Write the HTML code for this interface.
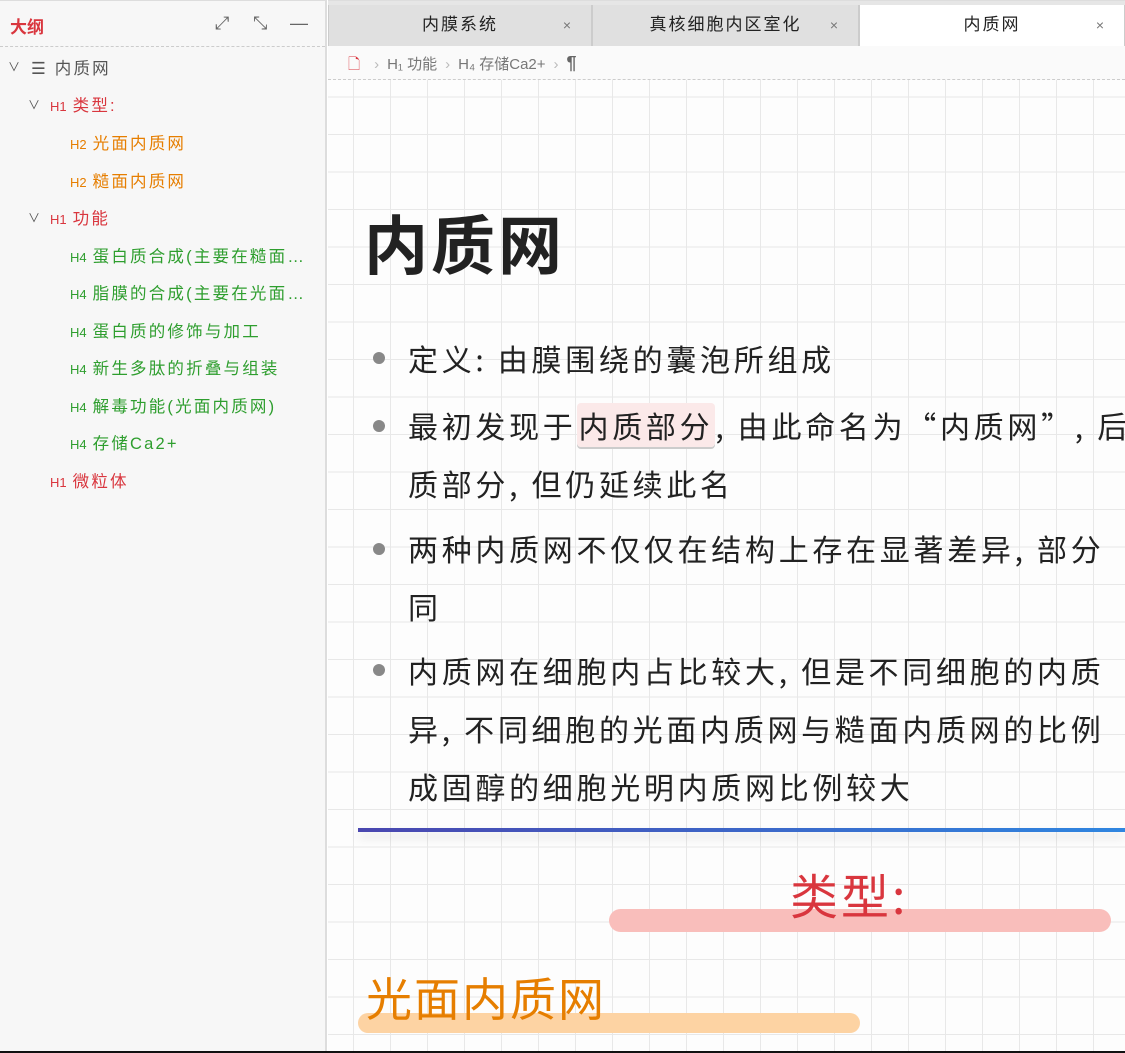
<!DOCTYPE html>
<html><head><meta charset="utf-8">
<style>
*{margin:0;padding:0;box-sizing:border-box}
body{width:1125px;height:1053px;overflow:hidden;background:#fff;font-family:"Liberation Sans","Noto Sans CJK SC",sans-serif;position:relative}
.side{position:absolute;left:0;top:0;width:327px;height:1053px;background:#f7f7f7;border-right:2px solid #ddd;border-top:1px solid #ddd}
.side .hd{height:46px;border-bottom:1px dashed #ccc;position:relative}
.side .hd b{position:absolute;left:10px;top:12px;color:#d9363e;font-size:17px}
.ic{position:absolute;top:12px;color:#666;font-size:18px}
.it{position:absolute;font-size:16.5px;white-space:nowrap;letter-spacing:2.2px}
.it small{font-size:13px;margin-right:6px;letter-spacing:0}
.r{color:#d9363e}.o{color:#e67e00}.g{color:#2e9e2e}
.car{position:absolute;font-size:12px;color:#555}
.tabs{position:absolute;left:328px;top:0;right:0;height:46px;background:#e6e6e6;border-top:1px solid #ddd}
.tab{position:absolute;top:4px;height:42px;background:#e0e0e0;border-left:1px solid #ccc;border-right:1px solid #ccc;font-size:17px;color:#222;text-align:center;line-height:40px;letter-spacing:2px}
.tab i{position:absolute;right:18px;top:0;font-style:normal;color:#777;font-size:14px}
.main{position:absolute;left:328px;top:46px;right:0;bottom:0;background-color:#fdfdfd;
background-image:linear-gradient(#e8e8e8 1px,transparent 1px),linear-gradient(90deg,#e8e8e8 1px,transparent 1px);background-size:37px 37.5px;background-position:25px 13px}
.bc{position:absolute;left:0;top:0;right:0;height:34px;background:#fafafa;border-bottom:1px dashed #ccc;font-size:15px;color:#777;line-height:34px;padding-left:20px}
.bc span{color:#bbb;margin:0 8px}
h1{position:absolute;left:36px;top:150px;font-size:64px;font-weight:700;color:#222;letter-spacing:3px;font-family:"Noto Sans CJK SC",sans-serif}
.li{position:absolute;left:80px;font-size:30px;color:#222;letter-spacing:3.7px;line-height:58px;white-space:nowrap;font-family:"Noto Sans CJK SC",sans-serif}
.dot{position:absolute;left:45px;width:12px;height:12px;border-radius:50%;background:#888}
.hl{background:#fbe9e9;border-radius:4px;box-shadow:0 2px 0 #ccc;padding:0 2px}
</style></head><body>
<div class="side">
 <div class="hd"><b>大纲</b>
  <span class="ic" style="left:215px">⤢</span><span class="ic" style="left:253px">⤡</span><span class="ic" style="left:290px">—</span></div>
 <span class="car" style="left:8px;top:57px">∨</span>
 <div class="it" style="left:31px;top:54px;color:#555">☰ 内质网</div>
 <span class="car" style="left:28px;top:95px">∨</span>
 <div class="it r" style="left:50px;top:91px"><small>H1</small>类型:</div>
 <div class="it o" style="left:70px;top:129px"><small>H2</small>光面内质网</div>
 <div class="it o" style="left:70px;top:167px"><small>H2</small>糙面内质网</div>
 <span class="car" style="left:28px;top:208px">∨</span>
 <div class="it r" style="left:50px;top:204px"><small>H1</small>功能</div>
 <div class="it g" style="left:70px;top:242px"><small>H4</small>蛋白质合成(主要在糙面…</div>
 <div class="it g" style="left:70px;top:279px"><small>H4</small>脂膜的合成(主要在光面…</div>
 <div class="it g" style="left:70px;top:317px"><small>H4</small>蛋白质的修饰与加工</div>
 <div class="it g" style="left:70px;top:354px"><small>H4</small>新生多肽的折叠与组装</div>
 <div class="it g" style="left:70px;top:392px"><small>H4</small>解毒功能(光面内质网)</div>
 <div class="it g" style="left:70px;top:429px"><small>H4</small>存储Ca2+</div>
 <div class="it r" style="left:50px;top:467px"><small>H1</small>微粒体</div>
</div>
<div class="tabs">
 <div class="tab" style="left:0;width:264px">内膜系统<i>×</i></div>
 <div class="tab" style="left:264px;width:267px">真核细胞内区室化<i>×</i></div>
 <div class="tab" style="left:531px;width:266px;background:#fff">内质网<i>×</i></div>
</div>
<div class="main">
 <div class="bc"><span style="color:#d9363e;margin:0 6px 0 0">🗋</span><span>›</span>H₁ 功能<span>›</span>H₄ 存储Ca2+<span>›</span><b style="color:#666;font-size:18px">¶</b></div>
 <h1>内质网</h1>
 <div class="dot" style="top:306px"></div><div class="li" style="top:283px">定义: 由膜围绕的囊泡所组成</div>
 <div class="dot" style="top:374px"></div><div class="li" style="top:350px">最初发现于<span class="hl">内质部分</span>, 由此命名为“内质网”, 后<br>质部分, 但仍延续此名</div>
 <div class="dot" style="top:497px"></div><div class="li" style="top:473px">两种内质网不仅仅在结构上存在显著差异, 部分<br>同</div>
 <div class="dot" style="top:618px"></div><div class="li" style="top:595px">内质网在细胞内占比较大, 但是不同细胞的内质<br>异, 不同细胞的光面内质网与糙面内质网的比例<br>成固醇的细胞光明内质网比例较大</div>
 <div style="position:absolute;left:30px;right:0;top:782px;height:4px;background:linear-gradient(90deg,#4a47b0,#2f86e0);box-shadow:0 6px 10px rgba(0,0,0,.12)"></div>
 <div style="position:absolute;left:281px;width:502px;top:863px;height:23px;border-radius:12px;background:#f9bebb"></div>
 <div style="position:absolute;left:462px;top:812px;font-size:48px;color:#d9363e;letter-spacing:3px;font-family:'Noto Sans CJK SC',sans-serif">类型:</div>
 <div style="position:absolute;left:30px;width:502px;top:967px;height:20px;border-radius:10px;background:#fdd3a3"></div>
 <div style="position:absolute;left:38px;top:918px;font-size:46px;color:#e67e00;letter-spacing:2px;font-family:'Noto Sans CJK SC',sans-serif">光面内质网</div>
</div>
<div style="position:absolute;left:0;right:0;bottom:0;height:2px;background:#111"></div>
</body></html>
